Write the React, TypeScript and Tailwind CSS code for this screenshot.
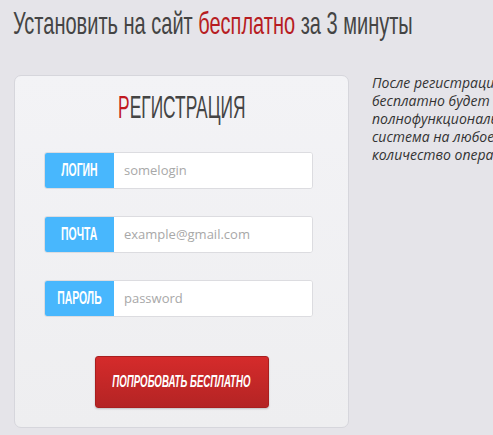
const fields = [
  { label: 'ЛОГИН', placeholder: 'somelogin', type: 'text' },
  { label: 'ПОЧТА', placeholder: 'example@gmail.com', type: 'email' },
  { label: 'ПАРОЛЬ', placeholder: 'password', type: 'password' },
]

const condensed = "inline-block font-['Liberation_Sans',Arial,sans-serif]"

const App = () => {
  return (
    <div className="h-[435px] w-[493px] overflow-hidden bg-[#e5e4e9]">
      {/* Heading */}
      <div className="h-[42px] pl-[13px] pt-[6px]">
        <h1
          className={`${condensed} origin-left scale-x-[0.625] whitespace-nowrap text-[32px] leading-[34px] text-[#444]`}
        >
          Установить на сайт <span className="text-[#b71c22]">бесплатно</span> за 3 минуты
        </h1>
      </div>

      <div className="mt-[33px] flex gap-[23px] pl-[14px]">
        {/* Card */}
        <div className="flex h-[353px] w-[335px] shrink-0 flex-col items-center rounded-[7px] border border-[#d6d6dc] bg-gradient-to-b from-[#f3f3f6] to-[#eeeef0] pt-[15px]">
          <h2
            className={`${condensed} scale-x-[0.56] whitespace-nowrap text-[31px] leading-[34px] text-[#444]`}
          >
            <span className="text-[#c0181f]">Р</span>ЕГИСТРАЦИЯ
          </h2>

          <div className="mr-[6px] mt-[27px] flex flex-col gap-[27px]">
            {fields.map((f) => (
              <div
                key={f.label}
                className="flex h-[37px] w-[269px] overflow-hidden rounded-[3px] border border-[#dcdce0] bg-white"
              >
                <div className="flex w-[69px] shrink-0 items-center justify-center bg-[#48b7fd]">
                  <span className={`${condensed} scale-x-[0.58] text-[18px] font-bold text-white`}>{f.label}</span>
                </div>
                <input
                  type={f.type}
                  placeholder={f.placeholder}
                  className="min-w-0 flex-1 bg-white px-[10px] font-['Open_Sans',sans-serif] text-[13px] text-[#333] outline-none placeholder:text-[#a8a8a8]"
                />
              </div>
            ))}
          </div>

          <button className="mt-[39px] flex h-[52px] w-[174px] items-center justify-center rounded-[3px] border border-[#a81f1f] bg-gradient-to-b from-[#d52b2b] to-[#b42424] shadow-[0_1px_2px_rgba(0,0,0,0.2)]">
            <span className={`${condensed} scale-x-[0.57] whitespace-nowrap text-[17px] font-bold italic text-white`}>
              ПОПРОБОВАТЬ БЕСПЛАТНО
            </span>
          </button>
        </div>

        {/* Side text */}
        <p className="mt-[-1px] whitespace-nowrap font-['Open_Sans',sans-serif] text-[14px] italic leading-[18px] text-[#333]">
          После регистрации вам
          <br />
          бесплатно будет доступна
          <br />
          полнофункциональная
          <br />
          система на любое
          <br />
          количество операторов
        </p>
      </div>
    </div>
  )
}

export default App
